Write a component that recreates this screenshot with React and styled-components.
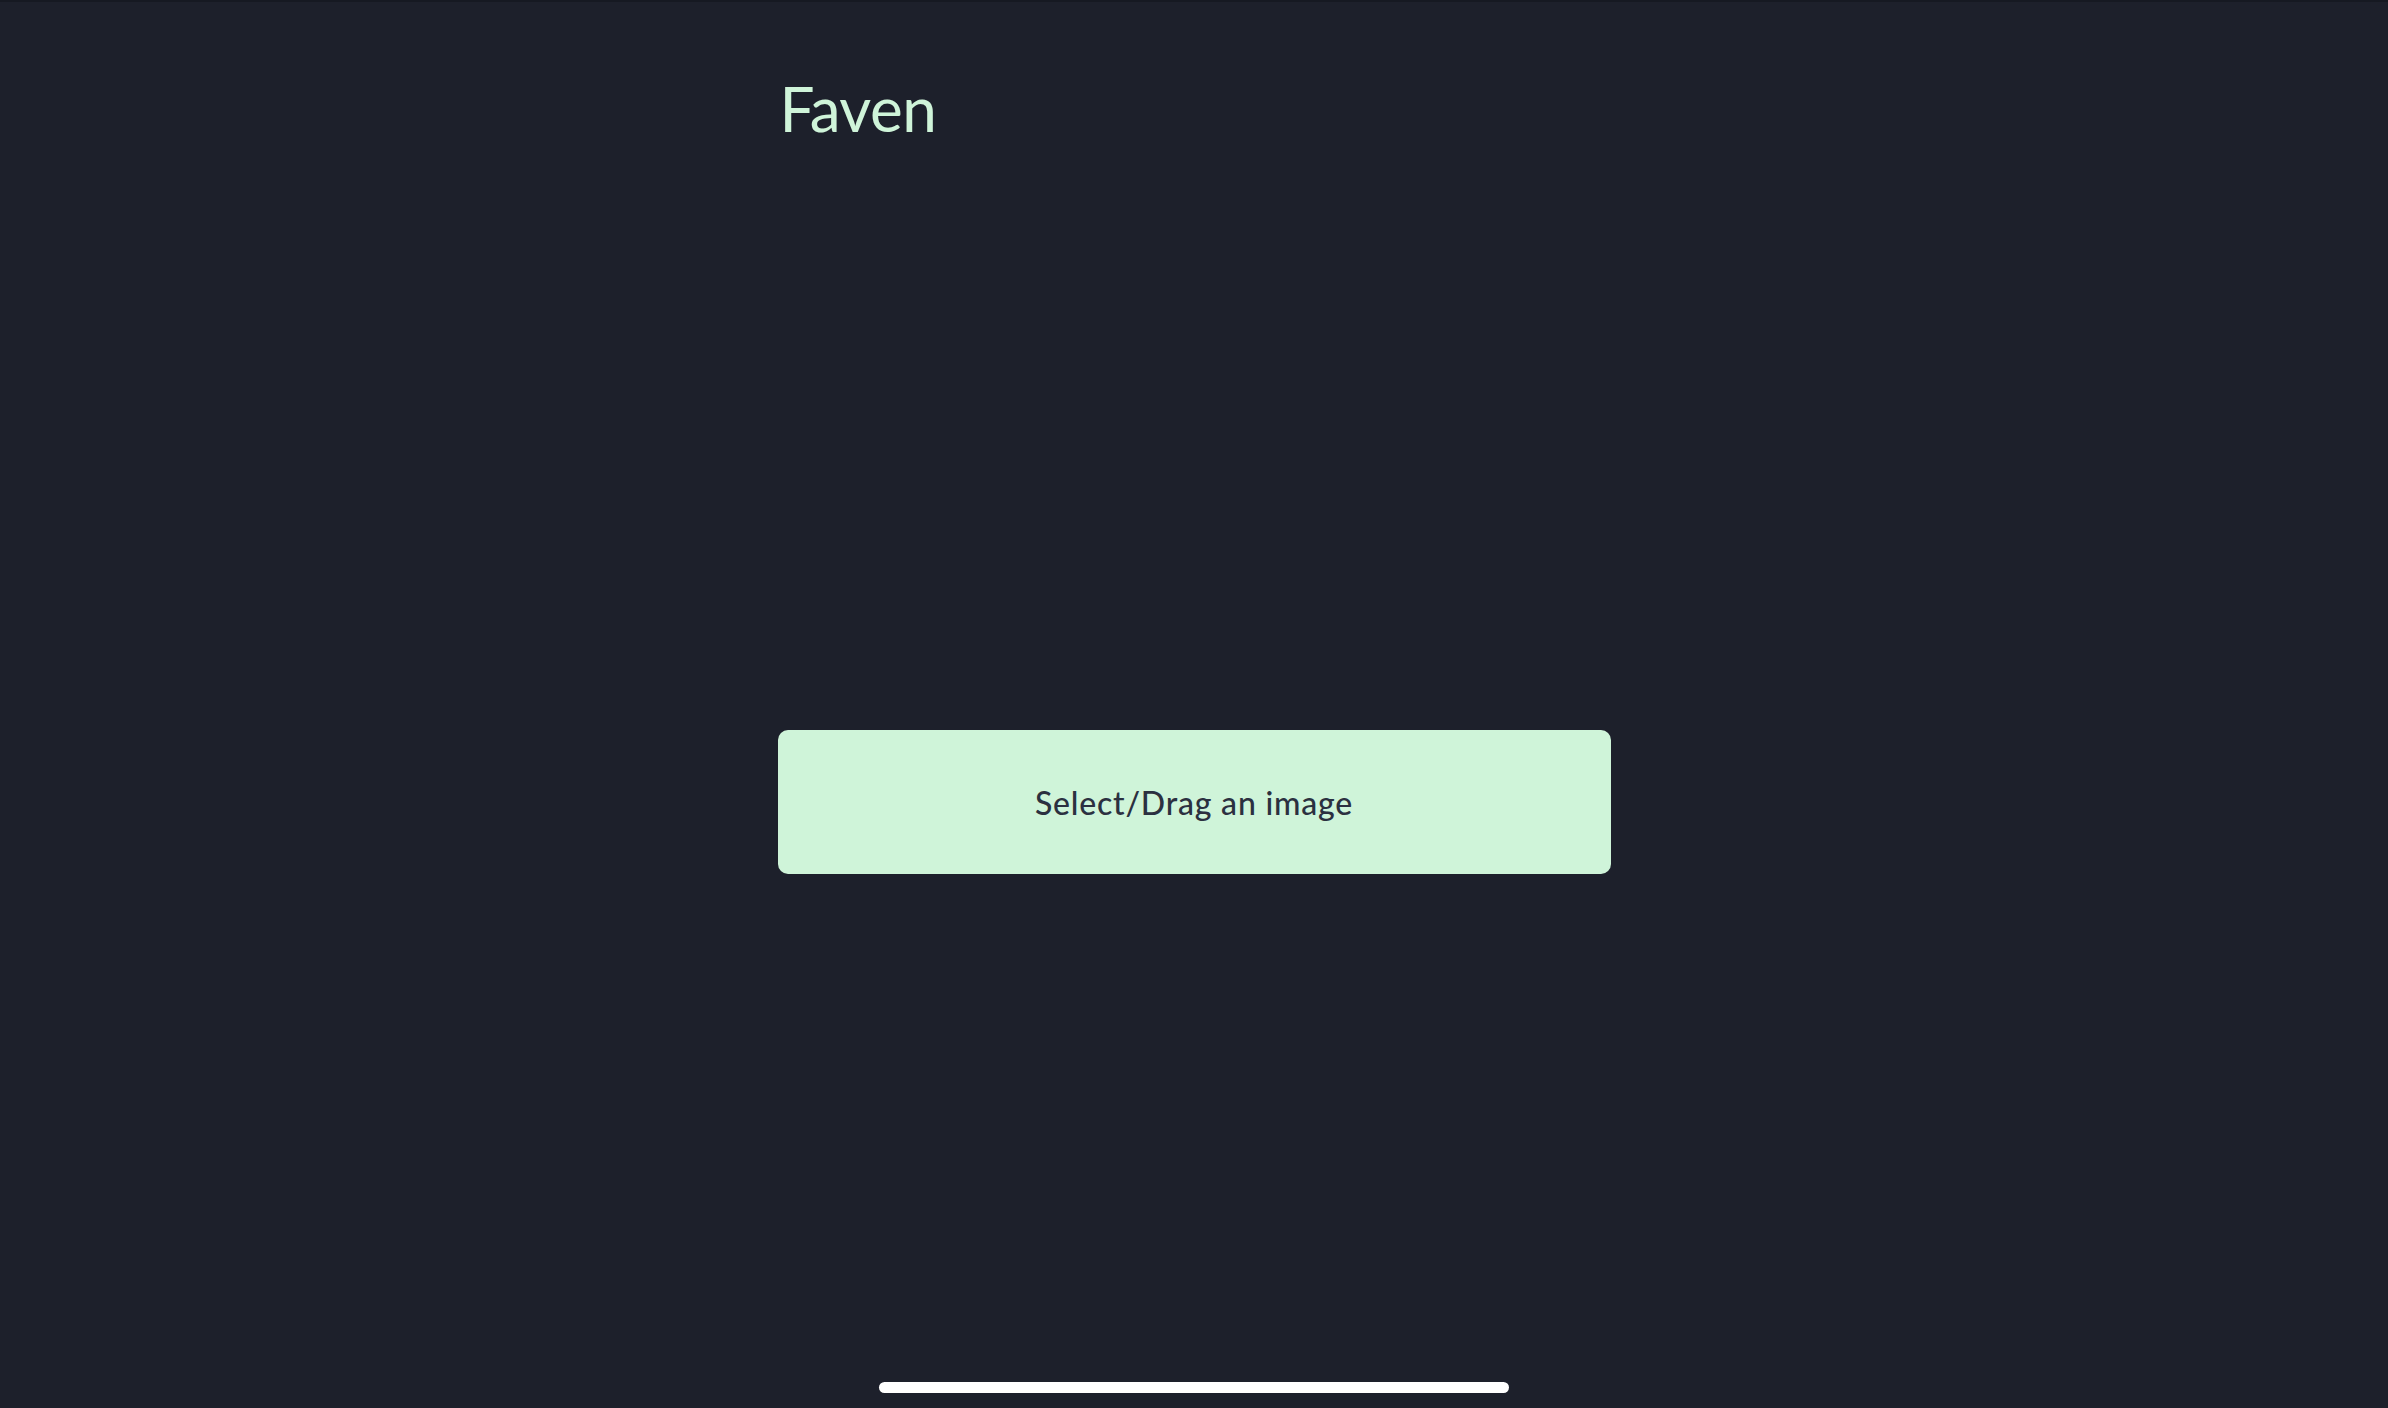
import styled, { createGlobalStyle } from "styled-components";

const GlobalStyle = createGlobalStyle`
  html, body {
    margin: 0;
    padding: 0;
    background: #1d202b;
  }
  body {
    font-family: Lato, "Noto Sans", sans-serif;
  }
`;

const Screen = styled.div`
  position: relative;
  height: 1408px;
  background: #1d202b;
  border-top: 2px solid #161922;
  box-sizing: border-box;
  overflow: hidden;
`;

const Column = styled.main`
  width: 833px;
  margin: 0 auto;
  display: flex;
  flex-direction: column;
`;

const Title = styled.h1`
  margin: 75px 0 0 2px;
  font-size: 62px;
  line-height: 1;
  font-weight: 400;
  color: #cff4d9;
  letter-spacing: -0.5px;
`;

const DropZone = styled.button`
  margin-top: 591px;
  height: 144px;
  width: 100%;
  border: none;
  border-radius: 10px;
  background: #cff4d9;
  color: #2b3040;
  font-family: Lato, "Noto Sans", sans-serif;
  font-size: 32px;
  font-weight: 500;
  letter-spacing: 0.8px;
  cursor: pointer;
  display: flex;
  align-items: center;
  justify-content: center;
`;

const HomeIndicator = styled.div`
  position: absolute;
  left: 50%;
  bottom: 15px;
  transform: translateX(-50%);
  width: 630px;
  height: 11px;
  border-radius: 6px;
  background: #ffffff;
`;

function App() {
  return (
    <>
      <GlobalStyle />
      <Screen>
        <Column>
          <Title>Faven</Title>
          <DropZone>Select/Drag an image</DropZone>
        </Column>
        <HomeIndicator />
      </Screen>
    </>
  );
}

export default App;
